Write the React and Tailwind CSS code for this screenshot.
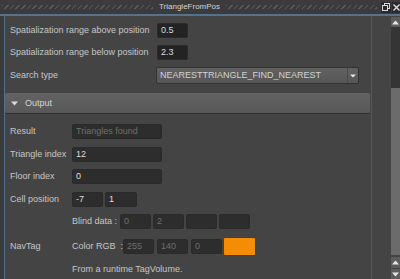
import React from 'react';

// small text field used all over the panel
const Field = ({ value = '', w = 'w-[31px]', dim = false, dark = false }) => (
    <div
        className={`${w} h-[15px] flex items-center px-[3px] rounded-[2px] border border-[#2a2a2a] ${dark ? 'bg-[#232323]' : 'bg-[#2d2d2d]'} ${dim ? 'text-[#6f6f6f]' : 'text-[#dedede]'}`}
    >
        {value}
    </div>
);

const Label = ({ children, w }) => (
    <div className={`${w} shrink-0 text-[#c6c6c6] whitespace-nowrap`}>{children}</div>
);

const ArrowUp = () => (
    <svg width="7" height="5" viewBox="0 0 7 5"><path d="M0 4.5 L3.5 0.5 L7 4.5 Z" fill="#e6e6e6" /></svg>
);
const ArrowDown = () => (
    <svg width="7" height="5" viewBox="0 0 7 5"><path d="M0 0.5 L3.5 4.5 L7 0.5 Z" fill="#e6e6e6" /></svg>
);

export default function App() {
    return (
        <div className="w-[400px] h-[279px] bg-[#444444] overflow-hidden font-['Liberation_Sans',Arial,sans-serif] text-[9px] leading-none flex flex-col">
            {/* title bar */}
            <div className="h-[14px] bg-[#3b3b3b] flex items-center shrink-0">
                <div className="flex-1 h-[4px] ml-[2px] mr-[6px] bg-[repeating-linear-gradient(135deg,#5c5c5c_0_1px,transparent_1px_4px)]" />
                <span className="text-[#d4d4d4] text-[8px]">TriangleFromPos</span>
                <div className="flex-1 h-[4px] ml-[6px] mr-[4px] bg-[repeating-linear-gradient(135deg,#5c5c5c_0_1px,transparent_1px_4px)]" />
                <div className="w-[10px] h-[11px] bg-[#2a2a2a] flex items-center justify-center">
                    <svg width="8" height="8" viewBox="0 0 8 8">
                        <rect x="2.5" y="0.5" width="5" height="5" fill="none" stroke="#d8d8d8" />
                        <rect x="0.5" y="2.5" width="5" height="5" fill="#2a2a2a" stroke="#d8d8d8" />
                    </svg>
                </div>
                <div className="w-[8px] h-[11px] bg-[#2a2a2a] ml-[1px] flex items-center justify-center">
                    <svg width="7" height="7" viewBox="0 0 7 7">
                        <path d="M0.5 0.5 L6.5 6.5 M6.5 0.5 L0.5 6.5" stroke="#e0e0e0" strokeWidth="1.4" />
                    </svg>
                </div>
            </div>
            <div className="h-[2px] bg-[#56718d] shrink-0" />

            {/* body */}
            <div className="flex-1 flex">
                <div className="w-[4px] bg-[#3a3a3a]" />
                <div className="w-[1px] bg-[#56718d]" />

                <div className="w-[366px] pl-[5px] pt-[7px] flex flex-col">
                    <div className="h-[15px] flex items-center">
                        <Label w="w-[147px]">Spatialization range above position</Label>
                        <Field value="0.5" dark />
                    </div>
                    <div className="h-[15px] mt-[7px] flex items-center">
                        <Label w="w-[147px]">Spatialization range below position</Label>
                        <Field value="2.3" dark />
                    </div>
                    <div className="h-[17px] mt-[7px] flex items-center">
                        <Label w="w-[146px]">Search type</Label>
                        <div className="w-[203px] h-[17px] flex items-center rounded-[2px] border border-[#333] bg-[linear-gradient(#626262,#565656)] text-[#d2d2d2]">
                            <span className="flex-1 pl-[3px]">NEARESTTRIANGLE_FIND_NEAREST</span>
                            <div className="w-[11px] h-full border-l border-[#4a4a4a] flex items-center justify-center">
                                <svg width="6" height="4" viewBox="0 0 6 4"><path d="M0 0.5 L3 3.5 L6 0.5 Z" fill="#e6e6e6" /></svg>
                            </div>
                        </div>
                    </div>

                    {/* Output header */}
                    <div className="-ml-[5px] mr-[1px] mt-[9px] h-[21px] flex items-center gap-[7px] pl-[6px] rounded-[2px] bg-[linear-gradient(#626262,#585858)] border-b border-[#2e2e2e] text-[#d6d6d6]">
                        <svg width="7" height="5" viewBox="0 0 7 5"><path d="M0 0.5 L3.5 4.5 L7 0.5 Z" fill="#dadada" /></svg>
                        <span>Output</span>
                    </div>

                    <div className="h-[15px] mt-[10px] flex items-center">
                        <Label w="w-[62px]">Result</Label>
                        <Field value="Triangles found" w="w-[90px]" dim />
                    </div>
                    <div className="h-[15px] mt-[8px] flex items-center">
                        <Label w="w-[62px]">Triangle index</Label>
                        <Field value="12" w="w-[90px]" />
                    </div>
                    <div className="h-[15px] mt-[7px] flex items-center">
                        <Label w="w-[62px]">Floor index</Label>
                        <Field value="0" w="w-[90px]" />
                    </div>
                    <div className="h-[15px] mt-[8px] flex items-center gap-[2px]">
                        <Label w="w-[60px]">Cell position</Label>
                        <Field value="-7" />
                        <Field value="1" w="w-[32px]" />
                    </div>
                    <div className="h-[15px] mt-[7px] flex items-center">
                        <div className="w-[62px]" />
                        <Label w="w-[48px]">Blind data :</Label>
                        <div className="flex gap-[2px]">
                            <Field value="0" dim />
                            <Field value="2" dim />
                            <Field />
                            <Field />
                        </div>
                    </div>
                    <div className="h-[19px] mt-[8px] flex items-center">
                        <Label w="w-[62px]">NavTag</Label>
                        <Label w="w-[51px]">Color RGB&nbsp;&nbsp;:</Label>
                        <div className="flex items-center gap-[3px]">
                            <Field value="255" dim />
                            <Field value="140" dim />
                            <Field value="0" dim />
                        </div>
                        <div className="w-[33px] h-[19px] ml-[1px] rounded-[2px] bg-[#f58c06] border border-[#5a3a10]" />
                    </div>
                    <div className="mt-[9px] pl-[62px] text-[#c6c6c6]">From a runtime TagVolume.</div>
                </div>

                <div className="w-[1px] bg-[#575757]" />
                <div className="w-[19px]" />

                {/* scrollbar */}
                <div className="w-[9px] flex flex-col pt-[1px]">
                    <div className="h-[10px] bg-[#5c5c5c] flex items-center justify-center"><ArrowUp /></div>
                    <div className="h-[61px] bg-[#353535]" />
                    <div className="h-[167px] bg-[#6b6b6b]" />
                    <div className="h-[2px]" />
                    <div className="h-[11px] bg-[#5c5c5c] flex items-center justify-center"><ArrowUp /></div>
                    <div className="h-[1px]" />
                    <div className="flex-1 bg-[#5c5c5c] flex items-center justify-center"><ArrowDown /></div>
                </div>
            </div>
        </div>
    );
}
